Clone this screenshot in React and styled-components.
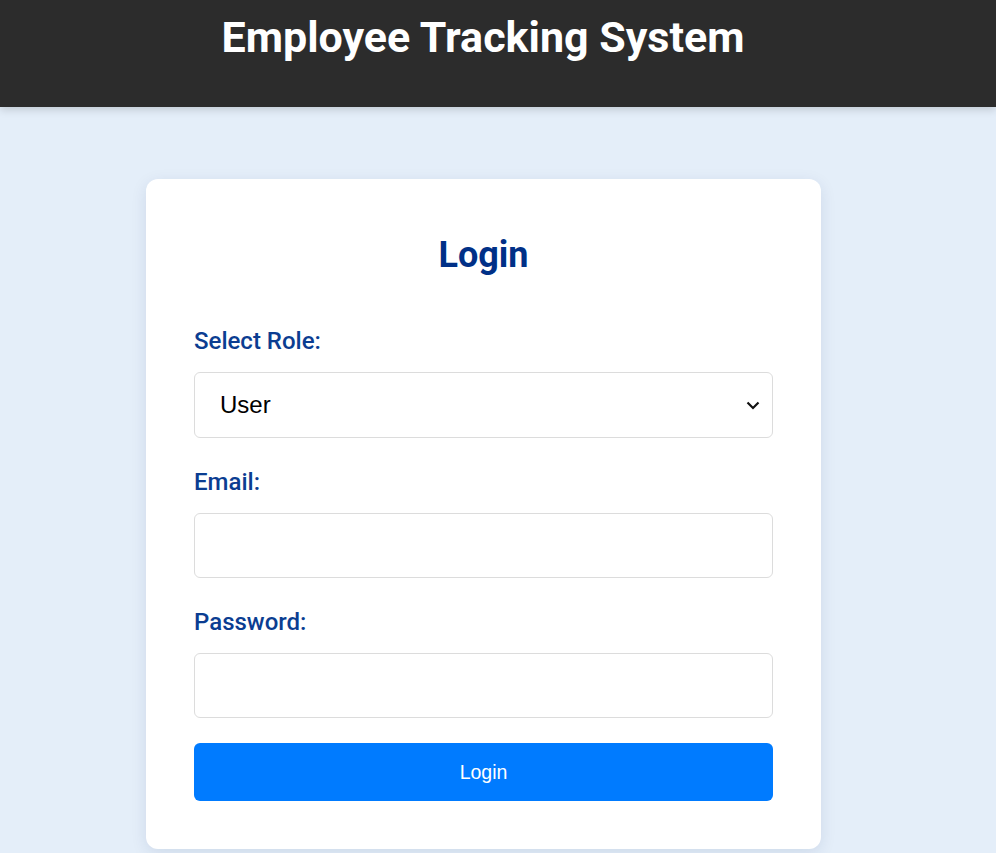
import React from "react";
import styled, { createGlobalStyle } from "styled-components";

const GlobalStyle = createGlobalStyle`
  html, body { margin: 0; padding: 0; }
  body {
    background: #e4eef9;
    font-family: Roboto, "Noto Sans", sans-serif;
    min-height: 100vh;
  }
  * { box-sizing: border-box; }
`;

const Header = styled.header`
  background: #2c2c2c;
  height: 107px;
  padding: 12px 30px 0 0;
  box-shadow: 0 3px 8px rgba(0, 0, 0, 0.15);
  display: flex;
  justify-content: center;
`;

const Title = styled.h1`
  margin: 0;
  color: #ffffff;
  font-family: Roboto, sans-serif;
  font-weight: 700;
  font-size: 43px;
  line-height: 50px;
`;

const Main = styled.main`
  display: flex;
  justify-content: center;
  padding: 72px 29px 0 0;
`;

const Card = styled.div`
  width: 675px;
  background: #ffffff;
  border-radius: 12px;
  padding: 48px 48px 48px;
  box-shadow: 0 4px 16px rgba(0, 40, 100, 0.1);
  display: flex;
  flex-direction: column;
`;

const Heading = styled.h2`
  margin: 0 0 45px;
  text-align: center;
  color: #003087;
  font-family: Roboto, sans-serif;
  font-weight: 700;
  font-size: 36px;
  line-height: 56px;
`;

const Label = styled.label`
  display: block;
  color: #0b3d91;
  font-family: Roboto, sans-serif;
  font-size: 24px;
  font-weight: 500;
  line-height: 26px;
  margin-bottom: 18px;
`;

const fieldBase = `
  width: 100%;
  height: 65px;
  border: 1px solid #dcdcdc;
  border-radius: 6px;
  background: #ffffff;
  margin-bottom: 31px;
  font-family: "Liberation Sans", Arial, sans-serif;
`;

const SelectBox = styled.div`
  ${fieldBase}
  height: 66px;
  position: relative;
  display: flex;
  align-items: center;
  padding: 0 12px 0 25px;
  font-size: 24px;
  color: #000;
  justify-content: space-between;
`;

const Input = styled.input`
  ${fieldBase}
  display: block;
  padding: 0 16px;
  font-size: 20px;
  outline: none;
`;

const Button = styled.button`
  width: 100%;
  height: 58px;
  border: none;
  border-radius: 6px;
  background: #007bff;
  color: #fff;
  font-family: "Liberation Sans", Arial, sans-serif;
  font-size: 19.5px;
  margin-top: -6px;
  cursor: pointer;
`;

const Chevron = () => (
  <svg width="14" height="10" viewBox="0 0 14 10">
    <path d="M1.5 2.5 L7 8 L12.5 2.5" fill="none" stroke="#111" strokeWidth="2.2" />
  </svg>
);

export default function App() {
  return (
    <>
      <GlobalStyle />
      <Header>
        <Title>Employee Tracking System</Title>
      </Header>
      <Main>
        <Card>
          <Heading>Login</Heading>
          <Label>Select Role:</Label>
          <SelectBox>
            <span>User</span>
            <Chevron />
          </SelectBox>
          <Label>Email:</Label>
          <Input type="email" />
          <Label>Password:</Label>
          <Input type="password" />
          <Button>Login</Button>
        </Card>
      </Main>
    </>
  );
}
